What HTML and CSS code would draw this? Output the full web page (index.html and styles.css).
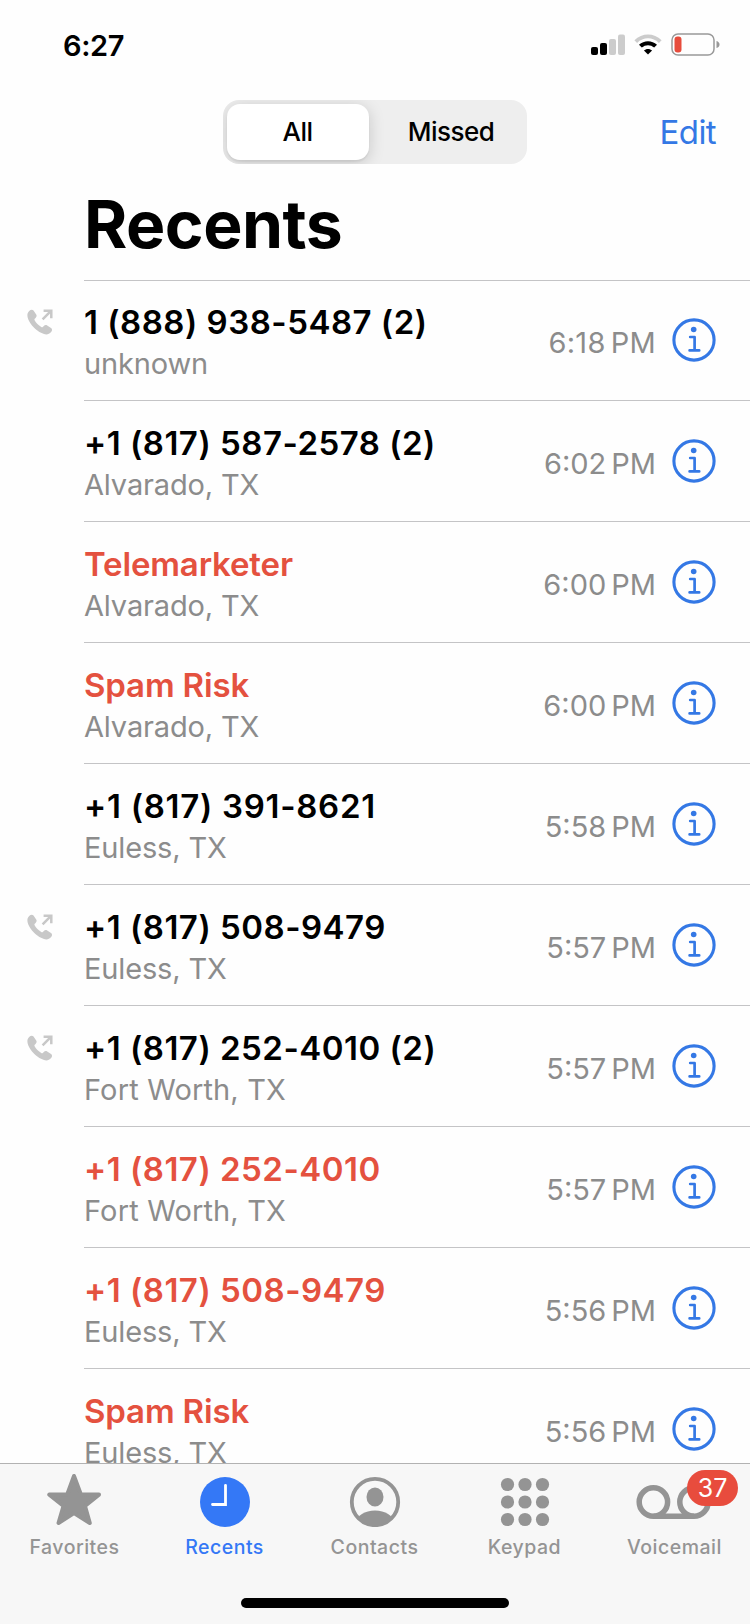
FILE: index.html
```html
<!DOCTYPE html>
<html lang="en">
<head>
  <meta charset="UTF-8">
  <meta name="viewport" content="width=device-width, initial-scale=1.0">
  <title>Recents</title>
  <link rel="stylesheet" href="styles.css">
</head>
<body>
  <!-- shared icons -->
  <svg class="sprite" width="0" height="0">
    <symbol id="info" viewBox="0 0 44 44">
      <circle cx="22" cy="22" r="20.1" fill="none" stroke="currentColor" stroke-width="3.1"/>
      <circle cx="21.7" cy="11.5" r="2.8" fill="currentColor"/>
      <path d="M18.2 19h4.4v13.3M17.6 32.4h9.6" fill="none" stroke="currentColor" stroke-width="2.7" stroke-linecap="round" stroke-linejoin="round"/>
    </symbol>
    <symbol id="outgoing" viewBox="0 0 26 26">
      <path d="M2.2 2C3.6.6 5.4.3 6.5 1.5L9.2 5.4C10 6.7 9.7 7.9 8.6 8.9L7.7 9.8C7.3 10.3 7.3 10.7 7.6 11.3C9 13.8 11.5 16.4 14.3 18C14.9 18.3 15.4 18.3 15.8 17.9L16.8 16.9C17.8 15.9 19 15.7 20.2 16.5L24 19.1C25.4 20.1 25.3 21.7 24.1 23.1C21.7 25.9 18.3 26 14.6 24.1C8.7 21.1 3.7 15.9 1.3 10.4C-.2 6.9.1 4 2.2 2Z" fill="currentColor"/>
      <path d="M15.6 10.3L24 1.9M16.6 1.7H24.3V9.3" fill="none" stroke="currentColor" stroke-width="2.5"/>
    </symbol>
  </svg>

  <div class="phone">
    <header class="status-bar">
      <span class="clock">6:27</span>
      <div class="status-icons">
        <svg class="signal" width="34" height="22" viewBox="0 0 34 22">
          <rect x="0" y="13" width="7" height="8" rx="2"/>
          <rect x="9" y="9" width="7" height="12" rx="2"/>
          <rect class="dim" x="18" y="5" width="7" height="16" rx="2"/>
          <rect class="dim" x="27" y="0.5" width="7" height="20.5" rx="2"/>
        </svg>
        <svg class="wifi" width="28" height="22" viewBox="0 0 28 22">
          <path class="dim" d="M0.4 6.2C8-1.5 20-1.5 27.6 6.2L24.9 8.9C18.8 2.8 9.2 2.8 3.1 8.9Z"/>
          <path d="M5 10.8C10 5.9 18 5.9 23 10.8L20.2 13.6C16.7 10.3 11.3 10.3 7.8 13.6Z"/>
          <path d="M9.9 16.6C12.2 14.4 15.8 14.4 18.1 16.6L14 20.6Z"/>
        </svg>
        <svg class="battery" width="49" height="23" viewBox="0 0 49 23">
          <rect x="1" y="1" width="42" height="21" rx="6" fill="none" stroke="#999" stroke-width="1.5"/>
          <rect x="3.5" y="3.5" width="7" height="16" rx="3" fill="#e74c3c"/>
          <path d="M45.5 8Q48.500 9 48.500 11.500T45.500 15Z" fill="#999"/>
        </svg>
      </div>
    </header>

    <nav class="nav-bar">
      <div class="segmented">
        <button class="segment selected">All</button>
        <button class="segment">Missed</button>
      </div>
      <a class="edit">Edit</a>
    </nav>

    <h1>Recents</h1>

    <ul class="calls">
      <li class="call">
        <svg class="outgoing"><use href="#outgoing"/></svg>
        <div class="who"><span class="name">1 (888) 938-5487 (2)</span><span class="place">unknown</span></div>
        <span class="time loose">6:18<i></i>PM</span>
        <svg class="info"><use href="#info"/></svg>
      </li>
      <li class="call">
        <div class="who"><span class="name">+1 (817) 587-2578 (2)</span><span class="place">Alvarado, TX</span></div>
        <span class="time">6:02<i></i>PM</span>
        <svg class="info"><use href="#info"/></svg>
      </li>
      <li class="call missed">
        <div class="who"><span class="name word">Telemarketer</span><span class="place">Alvarado, TX</span></div>
        <span class="time">6:00<i></i>PM</span>
        <svg class="info"><use href="#info"/></svg>
      </li>
      <li class="call missed">
        <div class="who"><span class="name word">Spam Risk</span><span class="place">Alvarado, TX</span></div>
        <span class="time">6:00<i></i>PM</span>
        <svg class="info"><use href="#info"/></svg>
      </li>
      <li class="call">
        <div class="who"><span class="name loose">+1 (817) 391-8621</span><span class="place">Euless, TX</span></div>
        <span class="time">5:58<i></i>PM</span>
        <svg class="info"><use href="#info"/></svg>
      </li>
      <li class="call">
        <svg class="outgoing"><use href="#outgoing"/></svg>
        <div class="who"><span class="name">+1 (817) 508-9479</span><span class="place">Euless, TX</span></div>
        <span class="time">5:57<i></i>PM</span>
        <svg class="info"><use href="#info"/></svg>
      </li>
      <li class="call">
        <svg class="outgoing"><use href="#outgoing"/></svg>
        <div class="who"><span class="name">+1 (817) 252-4010 (2)</span><span class="place loose">Fort Worth, TX</span></div>
        <span class="time">5:57<i></i>PM</span>
        <svg class="info"><use href="#info"/></svg>
      </li>
      <li class="call missed">
        <div class="who"><span class="name">+1 (817) 252-4010</span><span class="place loose">Fort Worth, TX</span></div>
        <span class="time">5:57<i></i>PM</span>
        <svg class="info"><use href="#info"/></svg>
      </li>
      <li class="call missed">
        <div class="who"><span class="name">+1 (817) 508-9479</span><span class="place">Euless, TX</span></div>
        <span class="time">5:56<i></i>PM</span>
        <svg class="info"><use href="#info"/></svg>
      </li>
      <li class="call missed">
        <div class="who"><span class="name word">Spam Risk</span><span class="place">Euless, TX</span></div>
        <span class="time">5:56<i></i>PM</span>
        <svg class="info"><use href="#info"/></svg>
      </li>
    </ul>

    <footer class="tab-bar">
      <div class="tabs">
        <a class="tab">
          <svg width="56" height="54" viewBox="0 0 56 54">
            <path d="M27 3L33.800 21.200L52 21.600L38 33L42.800 50L27 40L11.500 50L16.500 33L2.300 21.600L20.300 21.200Z" fill="currentColor" stroke="currentColor" stroke-width="4" stroke-linejoin="round"/>
          </svg>
          <span>Favorites</span>
        </a>
        <a class="tab active">
          <svg width="56" height="54" viewBox="0 0 56 54">
            <circle cx="28" cy="29" r="25" fill="currentColor"/>
            <path d="M28.5 12.3V31.5H15.500" fill="none" stroke="#fff" stroke-width="2.8" stroke-linecap="round"/>
          </svg>
          <span>Recents</span>
        </a>
        <a class="tab">
          <svg width="56" height="54" viewBox="0 0 56 54">
            <clipPath id="head"><circle cx="28" cy="29" r="23.5"/></clipPath>
            <circle cx="28" cy="29" r="23.2" fill="none" stroke="currentColor" stroke-width="3.8"/>
            <ellipse cx="28" cy="24" rx="8.5" ry="9.5" fill="currentColor"/>
            <ellipse cx="28" cy="49.5" rx="18.5" ry="12" fill="currentColor" clip-path="url(#head)"/>
          </svg>
          <span>Contacts</span>
        </a>
        <a class="tab">
          <svg width="56" height="54" viewBox="0 0 56 54" fill="currentColor">
            <circle cx="10.5" cy="11.5" r="6.6"/><circle cx="28" cy="11.5" r="6.6"/><circle cx="45.5" cy="11.5" r="6.6"/>
            <circle cx="10.5" cy="29" r="6.6"/><circle cx="28" cy="29" r="6.6"/><circle cx="45.5" cy="29" r="6.6"/>
            <circle cx="10.5" cy="46.5" r="6.6"/><circle cx="28" cy="46.5" r="6.6"/><circle cx="45.5" cy="46.5" r="6.6"/>
          </svg>
          <span>Keypad</span>
        </a>
        <a class="tab">
          <svg width="78" height="54" viewBox="0 0 78 54" fill="none" stroke="currentColor" stroke-width="5.5">
            <circle cx="17.4" cy="29" r="14.2"/>
            <circle cx="58" cy="29" r="14.2"/>
            <path d="M17.4 43.2H58"/>
          </svg>
          <b class="badge">37</b>
          <span>Voicemail</span>
        </a>
      </div>
      <div class="home-indicator"></div>
    </footer>
  </div>
</body>
</html>
```
FILE: styles.css
```css
* { box-sizing: border-box; }
body {
  margin: 0;
  background: #fefefe;
  color: #000;
  font-family: Inter, "Liberation Sans", sans-serif;
}
.sprite { position: absolute; }
.phone {
  width: 750px;
  height: 1624px;
  display: flex;
  flex-direction: column;
  overflow: hidden;
}

/* status bar */
.status-bar {
  height: 100px;
  flex: none;
  display: flex;
  justify-content: space-between;
  padding: 26px 30px 0 63px;
}
.clock {
  font-size: 29px;
  font-weight: 600;
  line-height: 39px;
  letter-spacing: -0.4px;
}
.status-icons {
  display: flex;
  align-items: flex-start;
  padding-top: 8px;
}
.wifi { margin-left: 9px; }
.battery { margin-left: 9px; margin-top: -1px; }
.dim { fill: #ccc; }

/* All / Missed */
.nav-bar {
  height: 64px;
  flex: none;
  display: grid;
  grid-template-columns: 223px 304px 1fr;
}
.segmented {
  grid-column: 2;
  display: grid;
  grid-template-columns: 142px 1fr;
  padding: 4px;
  background: #eee;
  border-radius: 16px;
  overflow: hidden;
}
.segment {
  border: none;
  padding: 0 0 0 10px;
  background: none;
  font-family: inherit;
  font-size: 26px;
  font-weight: 500;
  line-height: 56px;
  letter-spacing: -0.5px;
  color: #000;
}
.segment.selected {
  padding: 0 1px 0 0;
  background: #fff;
  border-radius: 13px;
  box-shadow: 0 3px 16px rgba(0, 0, 0, 0.17), 0 2px 2px rgba(0, 0, 0, 0.06);
}
.edit {
  justify-self: end;
  padding-right: 34px;
  font-size: 33px;
  line-height: 64px;
  letter-spacing: -0.6px;
  color: #3478e5;
}

h1 {
  margin: 0;
  height: 116px;
  flex: none;
  padding-left: 84px;
  font-size: 66px;
  font-weight: 700;
  line-height: 120px;
  letter-spacing: -0.5px;
}

/* call list */
.calls {
  flex: 1;
  min-height: 0;
  overflow: hidden;
  margin: 0;
  padding: 0;
  list-style: none;
}
.call {
  height: 121px;
  display: grid;
  grid-template-columns: 57px 1fr auto 44px;
  padding: 1px 34px 0 27px;
  background: linear-gradient(#c4c4c6, #c4c4c6) 84px 0 / 100% 1px no-repeat;
}
.call:first-child {
  height: 120px;
  padding-top: 0;
}
.outgoing {
  width: 26px;
  height: 26px;
  margin-top: 29px;
  color: #c8c8c8;
}
.who {
  grid-column: 2;
  display: flex;
  flex-direction: column;
  padding-top: 20px;
}
.name {
  font-size: 33px;
  font-weight: 600;
  line-height: 44px;
  letter-spacing: 0.5px;
}
.name.loose { letter-spacing: 0.72px; }
.name.word { letter-spacing: -0.15px; }
.place {
  margin-top: 2px;
  font-size: 29px;
  line-height: 36px;
  letter-spacing: -0.15px;
  color: #8c8c8c;
}
.place.loose { letter-spacing: 0.15px; }
.missed .name { color: #e4513f; }
.time {
  padding: 43px 16px 0 0;
  font-size: 29px;
  line-height: 40px;
  color: #8c8c8c;
}
.time.loose { letter-spacing: 0.3px; }
.time i {
  display: inline-block;
  width: 5px;
}
.info {
  width: 44px;
  height: 44px;
  margin-top: 38.4px;
  margin-left: -0.3px;
  color: #3478e5;
}

/* tab bar */
.tab-bar {
  height: 161px;
  flex: none;
  display: flex;
  flex-direction: column;
  align-items: center;
  border-top: 1px solid #b2b2b2;
  background: #f7f7f7;
}
.tabs {
  width: 100%;
  height: 134px;
  display: grid;
  grid-template-columns: repeat(5, 1fr);
}
.tab {
  position: relative;
  display: flex;
  flex-direction: column;
  align-items: center;
  padding-top: 9px;
  color: #949494;
  font-size: 19.5px;
  font-weight: 500;
  line-height: 24px;
  letter-spacing: 0.5px;
}
.tab span {
  margin-top: 8px;
  padding-right: 1px;
}
.tab.active { color: #3478f6; }
.badge {
  position: absolute;
  left: 87px;
  top: 6px;
  width: 51px;
  height: 36px;
  border-radius: 18px;
  background: #e84c3d;
  color: #fff;
  font-size: 25px;
  font-weight: 400;
  line-height: 36px;
  letter-spacing: 0;
  text-align: center;
}
.home-indicator {
  width: 268px;
  height: 10px;
  border-radius: 5px;
  background: #000;
}
```
